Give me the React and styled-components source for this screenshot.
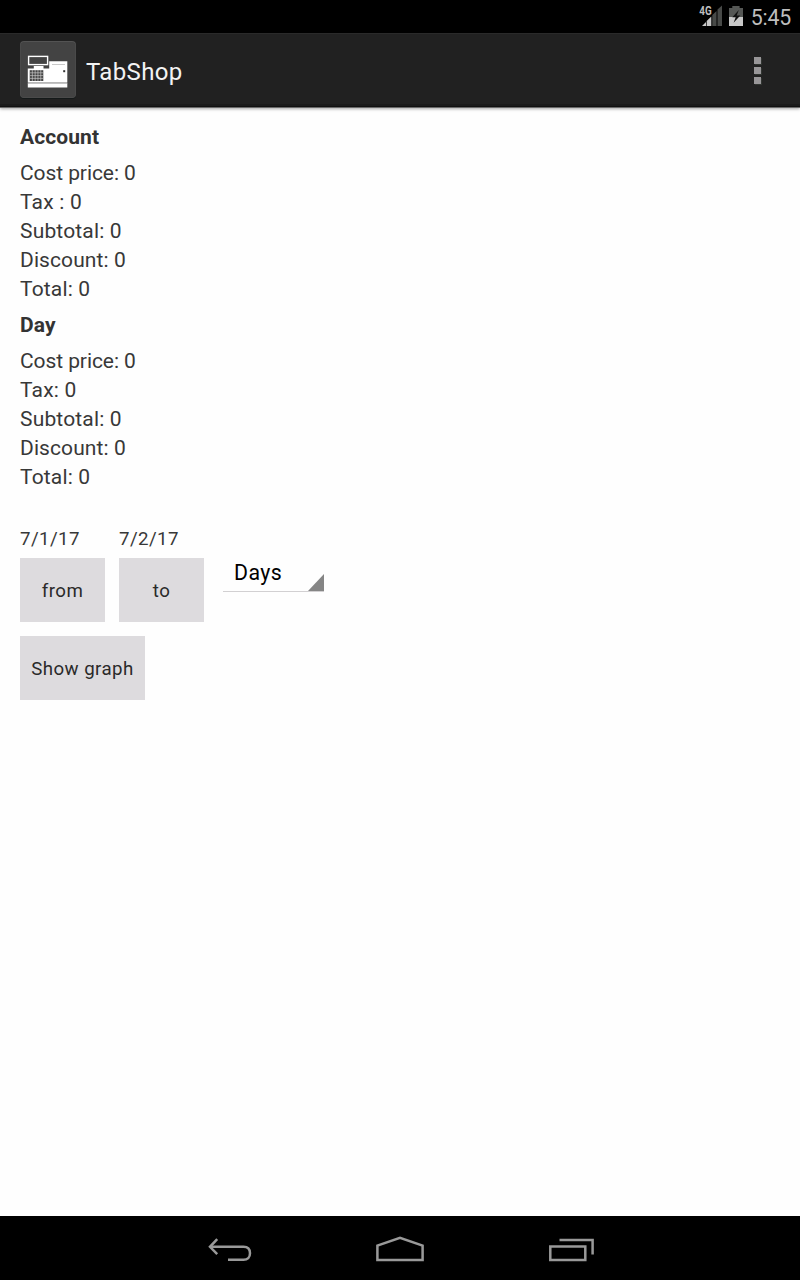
import React from "react";
import styled, { createGlobalStyle } from "styled-components";

const GlobalStyle = createGlobalStyle`
  * { box-sizing: border-box; }
  body { margin: 0; background: #fff; font-family: Roboto, sans-serif; }
`;

const Screen = styled.div`
  width: 800px;
  height: 1280px;
  display: flex;
  flex-direction: column;
  background: #fefefe;
  overflow: hidden;
`;

const StatusBar = styled.div`
  height: 33px;
  flex: none;
  background: #000;
  display: flex;
  justify-content: flex-end;
  align-items: flex-start;
  padding-right: 9px;
`;

const Clock = styled.span`
  margin-left: 7px;
  padding-top: 6px;
  font-size: 21.3px;
  line-height: 24px;
  letter-spacing: -0.2px;
  color: #bebebe;
`;

const ActionBar = styled.header`
  height: 75px;
  flex: none;
  display: flex;
  align-items: flex-start;
  padding: 0 38px 0 18px;
  background: linear-gradient(#2a2a2a 0 1px, #212121 1px 71px, #1b1b1b 71px 73px, #111 73px 74px, #6a6a6a 74px);
  box-shadow: 0 1px 3px rgba(0, 0, 0, 0.35);
`;

const AppTitle = styled.h1`
  margin: 25px 0 0 8px;
  flex: 1;
  font-size: 24px;
  line-height: 28px;
  font-weight: 400;
  letter-spacing: 0.35px;
  color: #f3f3f3;
`;

const Content = styled.main`
  flex: 1;
  padding: 15px 20px 0;
`;

const Heading = styled.h2`
  margin: 0;
  font-size: 21px;
  line-height: 29px;
  font-weight: 700;
  letter-spacing: 0.1px;
  color: #333;
`;

const Summary = styled.section`
  padding-bottom: 7px;
`;

const Line = styled.p`
  margin: 0;
  font-size: 21px;
  line-height: 29px;
  letter-spacing: ${(p) => p.$spacing}px;
  color: #383838;
`;

const Lines = styled.div`
  padding-top: 7px;
`;

const Controls = styled.div`
  display: flex;
  align-items: flex-start;
  margin-top: 26px;
`;

const DateField = styled.div`
  width: 85px;
  margin-right: 14px;
  display: flex;
  flex-direction: column;
`;

const DateText = styled.span`
  height: 33px;
  font-size: 18.7px;
  line-height: 28px;
  letter-spacing: 0.4px;
  color: #383838;
`;

const Button = styled.button`
  width: ${(p) => p.$width || 85}px;
  height: 64px;
  padding: 2px 0 0;
  border: 0;
  background: #dddbde;
  font: 400 18.7px/26px Roboto, sans-serif;
  letter-spacing: 0.45px;
  color: #2a2a2a;
`;

const Spinner = styled.div`
  width: 101px;
  height: 35px;
  margin: 32px 0 0 5px;
  padding-left: 11px;
  display: flex;
  justify-content: space-between;
  align-items: flex-end;
  border-bottom: 1px solid #d2d0d2;
  font-size: 21.3px;
  line-height: 29px;
  letter-spacing: 0.4px;
  color: #000;
`;

const SpinnerText = styled.span`
  padding-bottom: 4px;
`;

const GraphRow = styled.div`
  margin-top: 14px;
`;

const NavBar = styled.nav`
  height: 64px;
  flex: none;
  display: flex;
  justify-content: center;
  background: #000;
`;

const Drawing = styled.svg`
  display: block;
  flex: none;
  margin-top: ${(p) => p.$top || 0}px;
`;

const SignalIcon = () => (
  <Drawing width="24" height="30" viewBox="698 0 24 30">
    <path d="M702 26 L706 22V26Z M706.7 21 L711.3 16.5V26H706.7Z" fill="#c8c8c8" />
    <path d="M712.3 15 L716.5 11V26H712.3Z M717.5 9.5 L722 5.5V26H717.5Z" fill="#484a48" />
    <text x="699.3" y="15" fontFamily="Roboto, sans-serif" fontSize="12.6" fontWeight="700" textLength="12.4" lengthAdjust="spacingAndGlyphs" fill="#bebebe">4G</text>
  </Drawing>
);

const BatteryIcon = () => (
  <Drawing width="22" height="30" viewBox="722 0 22 30">
    <path d="M729 8H732.3V6H739.6V8H743V17H729Z" fill="#555755" />
    <path d="M729 17H743V26H729Z" fill="#c8c8c8" />
    <path d="M738.8 10L732.3 17.2H735.7L733.6 22.7L740.3 15.4H736.7Z" fill="#111" />
  </Drawing>
);

const RegisterIcon = () => (
  <Drawing $top={6} width="60" height="62" viewBox="18 39 60 62">
    <rect x="20" y="42" width="56" height="57" rx="4" fill="#151a1a" />
    <rect x="20" y="41" width="56" height="57" rx="4" fill="#535353" />
    <rect x="20.5" y="42" width="55" height="55.5" rx="3.5" fill="#434343" />
    <path d="M49.2 61.2H67.3V82H27.8V68.5H33.8V66H43.5V68.5H49.2Z M27.8 83.3H67.3V87.5H27.8Z" fill="#fff" />
    <path d="M27.8 82H67.3V83.4H27.8Z" fill="#b8b8b8" />
    <rect x="28.6" y="56.4" width="19" height="8.2" fill="#434343" stroke="#fff" strokeWidth="1.4" />
    <path d="M52 64.5H65" stroke="#c9c9c9" strokeWidth="1" />
    <rect x="63.2" y="70.2" width="2" height="2" fill="#333" />
    <rect x="29.7" y="70.2" width="13.6" height="10.8" fill="#454545" />
    <path d="M32.35 70V81 M35.15 70V81 M37.95 70V81 M40.75 70V81 M29.7 72.8H43.5 M29.7 75.6H43.5 M29.7 78.4H43.5" stroke="#ccc" strokeWidth=".65" />
  </Drawing>
);

const OverflowIcon = () => (
  <Drawing $top={23} width="8" height="30" viewBox="754 56 8 30">
    <path d="M755 58h7v7h-7z M755 68h7v7h-7z M755 78h7v7h-7z" fill="#303430" />
    <path d="M754 57h7v7h-7z M754 67h7v7h-7z M754 77h7v7h-7z" fill="#989698" />
  </Drawing>
);

const SpinnerArrow = () => (
  <Drawing width="16" height="17" viewBox="0 0 16 17">
    <path d="M16 0V17H0Z" fill="#858585" />
  </Drawing>
);

const NavIcons = () => (
  <Drawing width="400" height="64" viewBox="200 1216 400 64" fill="none" stroke="#999" strokeWidth="2.5">
    <path d="M217.2 1239.2L210 1246.8L217.2 1254.2" />
    <path d="M210 1246.8H243.5C248 1246.8 250 1249.5 250 1253.3C250 1257.3 247.5 1259.8 243.5 1259.8H228" />
    <path d="M377.4 1260V1245.6L400 1237.8L422.6 1245.6V1260Z" />
    <path d="M550.3 1246.6H585.3V1260H550.3Z M559.5 1240H592.6V1254.5" />
  </Drawing>
);

const account = [
  { text: "Cost price: 0", spacing: -0.08 },
  { text: "Tax : 0", spacing: 0.2 },
  { text: "Subtotal: 0", spacing: 0.17 },
  { text: "Discount: 0", spacing: 0.1 },
  { text: "Total: 0", spacing: 0.15 },
];

const day = account.map((line) => ({ ...line, text: line.text.replace(" :", ":") }));

const Totals = ({ title, lines }) => (
  <Summary>
    <Heading>{title}</Heading>
    <Lines>
      {lines.map(({ text, spacing }) => (
        <Line key={text} $spacing={spacing}>
          {text}
        </Line>
      ))}
    </Lines>
  </Summary>
);

export default function App() {
  return (
    <Screen>
      <GlobalStyle />
      <StatusBar>
        <SignalIcon />
        <BatteryIcon />
        <Clock>5:45</Clock>
      </StatusBar>
      <ActionBar>
        <RegisterIcon />
        <AppTitle>TabShop</AppTitle>
        <OverflowIcon />
      </ActionBar>
      <Content>
        <Totals title="Account" lines={account} />
        <Totals title="Day" lines={day} />
        <Controls>
          <DateField>
            <DateText>7/1/17</DateText>
            <Button>from</Button>
          </DateField>
          <DateField>
            <DateText>7/2/17</DateText>
            <Button>to</Button>
          </DateField>
          <Spinner>
            <SpinnerText>Days</SpinnerText>
            <SpinnerArrow />
          </Spinner>
        </Controls>
        <GraphRow>
          <Button $width={125}>Show graph</Button>
        </GraphRow>
      </Content>
      <NavBar>
        <NavIcons />
      </NavBar>
    </Screen>
  );
}
